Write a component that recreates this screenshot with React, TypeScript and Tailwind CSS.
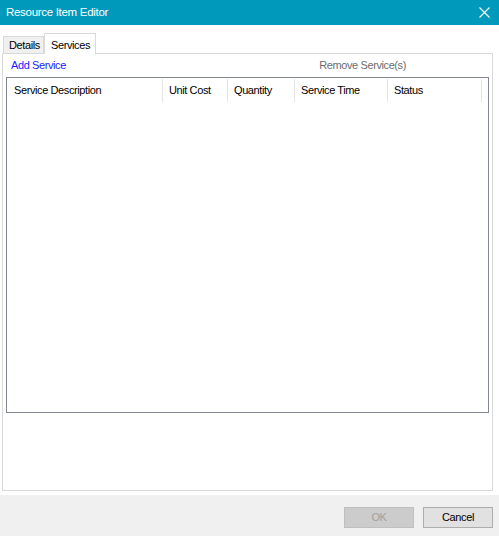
const columns = [
  { label: "Service Description", width: "w-[155px]" },
  { label: "Unit Cost", width: "w-[65px]" },
  { label: "Quantity", width: "w-[67px]" },
  { label: "Service Time", width: "w-[93px]" },
  { label: "Status", width: "w-[94px]" },
];

export default function App() {
  return (
    <div className="w-[499px] h-[536px] flex flex-col bg-white font-['Liberation_Sans',Arial,sans-serif] text-[11px] tracking-[-0.4px] text-black">
      {/* title bar */}
      <div className="h-[25px] bg-[#0099bc] flex items-center justify-between pl-[6px] pr-[9px] text-white text-[11.5px] tracking-[-0.3px]">
        <span>Resource Item Editor</span>
        <svg width="11" height="11" viewBox="0 0 11 11" className="stroke-white">
          <path d="M0.5 0.5 L10.5 10.5 M10.5 0.5 L0.5 10.5" strokeWidth="1.1" />
        </svg>
      </div>

      <div className="flex-1 flex flex-col pt-[8px] px-[2px]">
        {/* tabs */}
        <div className="flex items-end h-[20px] pl-[1px]">
          <div className="w-[41px] h-[17px] pl-[5px] border border-b-0 border-[#d9d9d9] bg-[#f0f0f0] flex items-center pt-[1px]">
            Details
          </div>
          <div className="w-[52px] h-[21px] pl-[6px] border border-b-0 border-[#d9d9d9] bg-white flex items-start pt-[3px] -mb-px relative z-10">
            Services
          </div>
        </div>

        {/* tab page */}
        <div className="h-[438px] w-[491px] border border-[#d9d9d9] flex flex-col px-[3px]">
          <div className="h-[23px] flex items-center justify-between pl-[5px] pr-[83px]">
            <span className="text-[#1a1aff]">Add Service</span>
            <span className="text-[#6d6d6d]">Remove Service(s)</span>
          </div>
          <div className="h-[336px] w-[483px] border border-[#828790] pl-px pt-px">
            <div className="flex h-[23px]">
              {columns.map((c) => (
                <div
                  key={c.label}
                  className={`${c.width} h-full border-r border-[#e5e5e5] pl-[6px] flex items-center`}
                >
                  {c.label}
                </div>
              ))}
            </div>
          </div>
        </div>
      </div>

      {/* button strip */}
      <div className="h-[41px] bg-[#f0f0f0] flex items-center justify-end gap-[9px] pr-[6px] pt-[3px]">
        <button className="w-[70px] h-[21px] bg-[#cccccc] border border-[#bfbfbf] text-[#a0a0a0]">
          OK
        </button>
        <button className="w-[70px] h-[21px] bg-[#e1e1e1] border border-[#adadad]">
          Cancel
        </button>
      </div>
    </div>
  );
}
